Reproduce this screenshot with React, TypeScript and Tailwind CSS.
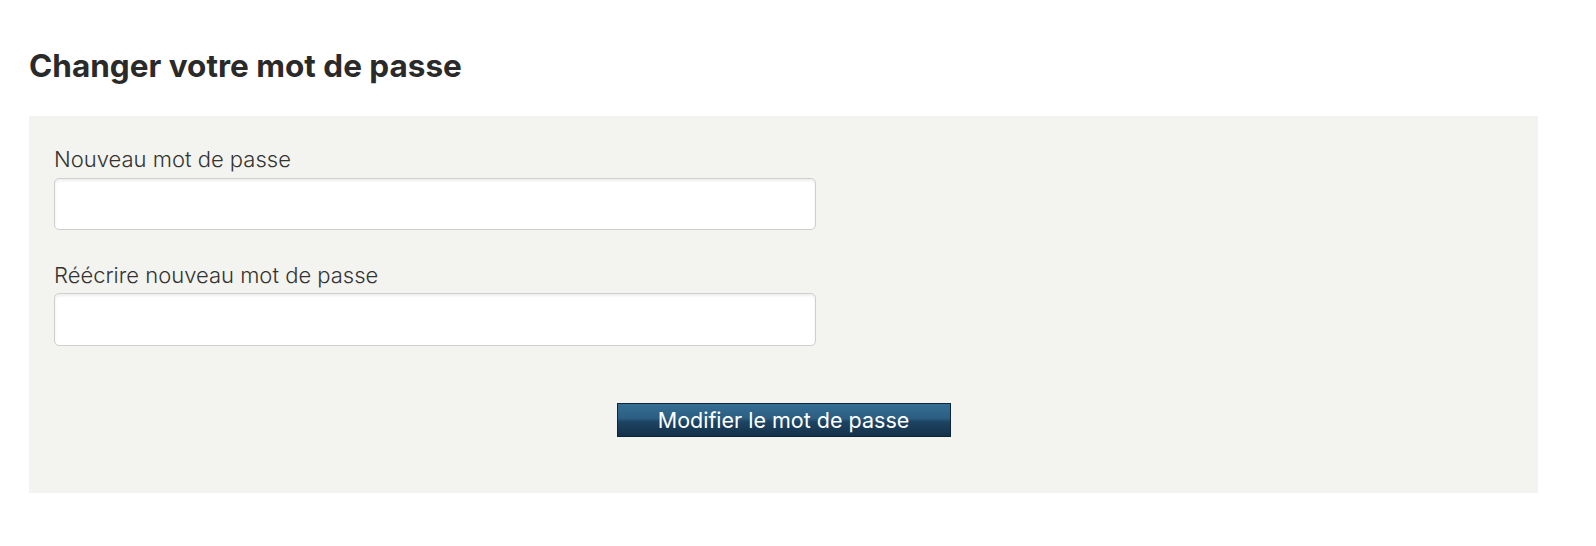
import React from "react";

export default function App() {
  return (
    <div className="w-[1596px] h-[546px] bg-white text-[#2b2b2b]" style={{ fontFamily: "Inter, 'Noto Sans', sans-serif" }}>
      <div className="px-[29px] pt-[46px]">
        <h1 className="text-[31.5px] leading-[40px] font-bold text-[#2a2a2a]">Changer votre mot de passe</h1>
        <div className="mt-[30px] w-[1509px] bg-[#f3f3ef] pl-[25px] pr-[25px] pt-[30px] pb-[56px]">
          <label className="block text-[22px] leading-[26px] font-light text-[#333]">Nouveau mot de passe</label>
          <input type="password" className="mt-[6px] block w-[762px] h-[52px] bg-white border border-[#cfcfcf] rounded-[5px] shadow-[inset_0_2px_3px_rgba(0,0,0,0.07)] outline-none" />
          <label className="block mt-[32px] text-[22px] leading-[26px] font-light text-[#333]">Réécrire nouveau mot de passe</label>
          <input type="password" className="mt-[5px] block w-[762px] h-[53px] bg-white border border-[#cfcfcf] rounded-[5px] shadow-[inset_0_2px_3px_rgba(0,0,0,0.07)] outline-none" />
          <div className="mt-[57px] flex justify-center">
            <button className="w-[334px] h-[34px] border border-[#0e2638] bg-[linear-gradient(to_bottom,#356e94_0%,#2b5e81_45%,#1d4464_55%,#143148_100%)] text-white text-[21.5px] leading-[32px] font-normal">
              Modifier le mot de passe
            </button>
          </div>
        </div>
      </div>
    </div>
  );
}
